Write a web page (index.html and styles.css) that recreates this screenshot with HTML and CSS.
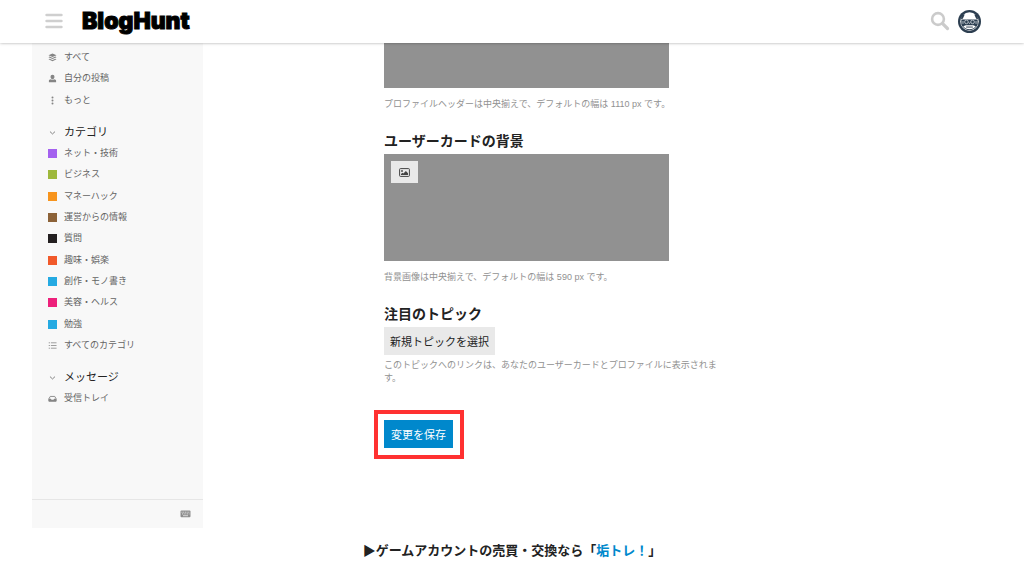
FILE: index.html
```html
<!DOCTYPE html>
<html lang="ja">
	<head>
		<meta charset="UTF-8">
		<meta name="viewport" content="width=device-width, initial-scale=1.0">
		<title>BlogHunt</title>

		<link rel="stylesheet" href="styles.css">
	</head>

	<body>
		<header class="site-header">
			<button class="icon-button" type="button" aria-label="メニュー">
				<svg width="18" height="16" viewBox="0 0 18 16" fill="none" stroke="#cfcfcf" stroke-width="2.6" stroke-linecap="round">
					<path d="M1.6 2h14.8M1.6 8h14.8M1.6 14h14.8"/>
				</svg>
			</button>

			<a class="logo" href="#">BlogHunt</a>

			<div class="header-tools">
				<button class="icon-button" type="button" aria-label="検索">
					<svg width="20" height="20" viewBox="0 0 20 20" fill="none" stroke="#cbcbcb" stroke-linecap="round">
						<circle cx="8" cy="8" r="5.9" stroke-width="2.6"/>
						<path d="M12.6 12.6l4.9 4.9" stroke-width="3.2"/>
					</svg>
				</button>

				<button class="icon-button" type="button" aria-label="アカウント">
					<svg width="23" height="23" viewBox="0 0 24 24">
						<circle cx="12" cy="12" r="12" fill="#2c3e50"/>
						<circle cx="12" cy="12" r="9.6" fill="#fff"/>
						<path d="M3.500 10h17v5.500c-1.500 3.200-4.500 5.500-8.500 5.500s-7-2.300-8.500-5.500z" fill="#2c3e50"/>
						<path d="M4 4.500l3 .3-2 4.200-2 .5zM20 4.500l-3 .3 2 4.200 2 .5z" fill="#2c3e50"/>
						<path d="M5.500 17l2.500-1.200h8l2.500 1.200c-1.500 2-3.700 3.200-6.500 3.200s-5-1.200-6.500-3.200z" fill="#fff"/>
						<path d="M8.500 17.800h7" stroke="#2c3e50"/>
						<g fill="none" stroke="#b9c1c9">
							<circle cx="8.800" cy="12.400" r="1.900"/>
							<circle cx="15.200" cy="12.400" r="1.900"/>
							<path d="M11.200 13l.8 1.200.8-1.200M5.200 11.500v3M18.800 11.500v3"/>
						</g>
					</svg>
				</button>
			</div>
		</header>

		<div class="layout">
			<nav class="sidebar">
				<ul class="nav-list">
					<li><a href="#">
						<svg class="nav-icon" viewBox="0 0 10 10" fill="#858585"><path d="M5 .5l4.500 2L5 4.500.5 2.500zM.5 4.600l1.300-.6L5 5.500 8.200 4l1.300.6L5 6.800zM.5 7l1.300-.6L5 7.900l3.200-1.500 1.300.6L5 9.300z"/></svg>
						すべて
					</a></li>
					<li><a href="#">
						<svg class="nav-icon" viewBox="0 0 10 10" fill="#858585"><path d="M5 .8a2.200 2.200 0 0 1 2.200 2.300C7.200 4.600 6.300 5.700 5 5.700S2.800 4.600 2.800 3.100A2.200 2.200 0 0 1 5 .8zM1 9.200V7.600C1 6.400 2 6 3.300 5.900c1 .8 2.400.8 3.400 0C8 6 9 6.400 9 7.600v1.600z"/></svg>
						自分の投稿
					</a></li>
					<li><a href="#">
						<svg class="nav-icon" viewBox="0 0 10 10" fill="#858585"><circle cx="5" cy="1.600" r="1.100"/><circle cx="5" cy="5" r="1.100"/><circle cx="5" cy="8.400" r="1.100"/></svg>
						もっと
					</a></li>
				</ul>

				<button class="nav-heading" type="button">
					<svg class="nav-icon" viewBox="0 0 10 10" fill="none" stroke="#777"><path d="M2.200 4L5 6.600 7.800 4"/></svg>
					カテゴリ
				</button>
				<ul class="nav-list categories">
					<li><a href="#"><span class="swatch purple"></span>ネット・技術</a></li>
					<li><a href="#"><span class="swatch green"></span>ビジネス</a></li>
					<li><a href="#"><span class="swatch orange"></span>マネーハック</a></li>
					<li><a href="#"><span class="swatch brown"></span>運営からの情報</a></li>
					<li><a href="#"><span class="swatch black"></span>質問</a></li>
					<li><a href="#"><span class="swatch red"></span>趣味・娯楽</a></li>
					<li><a href="#"><span class="swatch blue"></span>創作・モノ書き</a></li>
					<li><a href="#"><span class="swatch pink"></span>美容・ヘルス</a></li>
					<li><a href="#"><span class="swatch blue"></span>勉強</a></li>
					<li><a href="#">
						<svg class="nav-icon" viewBox="0 0 10 10" fill="none" stroke="#888" stroke-width=".9"><path d="M.8 2h1.400M3.200 2h6.300M.8 5h1.400M3.200 5h6.300M.8 8h1.400M3.200 8h6.300"/></svg>
						すべてのカテゴリ
					</a></li>
				</ul>

				<button class="nav-heading" type="button">
					<svg class="nav-icon" viewBox="0 0 10 10" fill="none" stroke="#777"><path d="M2.200 4L5 6.600 7.800 4"/></svg>
					メッセージ
				</button>
				<ul class="nav-list">
					<li><a href="#">
						<svg class="nav-icon" viewBox="0 0 10 10"><path d="M1 5.300l1.500-2.600h5L9 5.300v2.600H1z" fill="none" stroke="#858585"/><path d="M.8 5.300h2.400l.7 1.200h2.200l.7-1.200h2.400v3H.8z" fill="#858585"/></svg>
						受信トレイ
					</a></li>
				</ul>

				<div class="sidebar-footer">
					<button class="icon-button" type="button" aria-label="キーボードショートカット">
						<svg width="11" height="8" viewBox="0 0 11 8">
							<rect x=".5" y=".5" width="10" height="6.800" rx="1" fill="#8d8d8d"/>
							<path d="M1.500 2.200h8M2 3.900h7.500" stroke="#e8e8e8" stroke-width=".9" stroke-dasharray="1 .7"/>
							<path d="M3 5.700h5" stroke="#e8e8e8" stroke-width=".8"/>
						</svg>
					</button>
				</div>
			</nav>

			<main class="content">
				<form class="profile-form">
					<div class="image-box header-image"></div>
					<p class="hint">プロファイルヘッダーは中央揃えで、デフォルトの幅は 1110 px です。</p>

					<h2>ユーザーカードの背景</h2>
					<div class="image-box card-image">
						<button class="upload-button" type="button" aria-label="画像を選択">
							<svg width="11" height="9" viewBox="0 0 11 9">
								<rect x=".6" y=".6" width="9.800" height="7.800" rx=".8" fill="none" stroke="#444"/>
								<circle cx="3" cy="3" r=".9" fill="#444"/>
								<path d="M2 7V6l1.400-1.300 1 .9L6.900 3 9 5.200V7z" fill="#444"/>
							</svg>
						</button>
					</div>
					<p class="hint">背景画像は中央揃えで、デフォルトの幅は 590 px です。</p>

					<h2>注目のトピック</h2>
					<button class="btn" type="button">新規トピックを選択</button>
					<p class="hint topic-hint">このトピックへのリンクは、あなたのユーザーカードとプロファイルに表示されます。</p>

					<div class="save-frame">
						<button class="btn btn-primary" type="button">変更を保存</button>
					</div>
				</form>
			</main>
		</div>

		<footer class="site-footer">
			▶ゲームアカウントの売買・交換なら「<a href="#">垢トレ！</a>」
		</footer>
	</body>
</html>
```

FILE: styles.css
```css
* {
	box-sizing: border-box;
}

body {
	margin: 0;
	background: #fff;
	color: #222;
	font-family: "Liberation Sans", "Noto Sans CJK JP", sans-serif;
	font-size: 11px;
}

a {
	color: #0088cc;
	text-decoration: none;
}

button {
	border: 0;
	font: inherit;
	cursor: pointer;
}

svg {
	display: block;
}

.site-header {
	position: sticky;
	top: 0;
	z-index: 1;
	display: flex;
	align-items: center;
	height: 43px;
	padding: 0 43px 1px 45px;
	background: #fff;
	box-shadow: 0 0 3px rgba(0, 0, 0, 0.35);
}

.icon-button {
	padding: 0;
	background: none;
}

.logo {
	margin-left: 19px;
	color: #000;
	font-family: Inter, sans-serif;
	font-size: 23px;
	font-weight: 900;
	line-height: 24px;
	-webkit-text-stroke: 1px #000;
}

.header-tools {
	display: flex;
	align-items: center;
	gap: 8px;
	margin-left: auto;
}

.layout {
	display: grid;
	grid-template-columns: 171px 1fr;
	padding: 0 32px;
}

/* sidebar */
.sidebar {
	display: flex;
	flex-direction: column;
	min-height: 485px;
	padding-top: 4px;
	background: #f8f8f8;
}

.nav-list {
	display: grid;
	grid-auto-rows: 1fr;
	margin: 0;
	padding: 0 16px;
	list-style: none;
}

.nav-list a {
	display: flex;
	align-items: center;
	gap: 7px;
	height: 100%;
	color: #646464;
	font-size: 9px;
	line-height: 21px;
}

.nav-list:first-child {
	height: 64px;
}

.categories {
	height: 213px;
}

.nav-icon {
	width: 9px;
	height: 9px;
}

.swatch {
	width: 9px;
	height: 9px;
}

.purple { background: #a461ef; }
.green { background: #9eb83b; }
.orange { background: #f7941d; }
.brown { background: #8c6238; }
.black { background: #231f20; }
.red { background: #f1592a; }
.blue { background: #25aae2; }
.pink { background: #ed207b; }

.nav-heading {
	display: flex;
	align-items: center;
	gap: 7px;
	margin-top: 11px;
	padding: 0 16px;
	background: none;
	color: #222;
	line-height: 21px;
}

.sidebar-footer {
	display: flex;
	align-items: center;
	justify-content: flex-end;
	height: 29px;
	margin-top: auto;
	padding-right: 12px;
	border-top: 1px solid #e6e6e6;
}

/* profile form */
.content {
	padding-left: 181px;
}

.profile-form {
	max-width: 344px;
}

.profile-form h2 {
	margin: 20px 0 3px;
	font-size: 14px;
	line-height: 20px;
}

.image-box {
	max-width: 285px;
	background: #919191;
}

.header-image {
	height: 45px;
}

.card-image {
	height: 107px;
	padding: 7px;
}

.upload-button {
	display: grid;
	place-items: center;
	width: 27px;
	height: 22px;
	padding: 0;
	background: #e9e9e9;
}

.hint {
	margin: 10px 0 0;
	color: #919191;
	font-size: 9px;
	line-height: 13px;
}

.btn {
	display: block;
	height: 28px;
	padding: 0 6px;
	background: #e9e9e9;
	color: #222;
}

.btn-primary {
	padding: 0 7px;
	background: #0088cc;
	color: #fff;
}

.topic-hint {
	max-width: 341px;
	margin-top: 4px;
}

.save-frame {
	width: fit-content;
	margin: 25px 0 0 -10px;
	padding: 6px 7px 7px 6px;
	border: 4px solid #ff3131;
}

.site-footer {
	margin-top: 13px;
	font-size: 13px;
	font-weight: 700;
	line-height: 20px;
	text-align: center;
}
```
